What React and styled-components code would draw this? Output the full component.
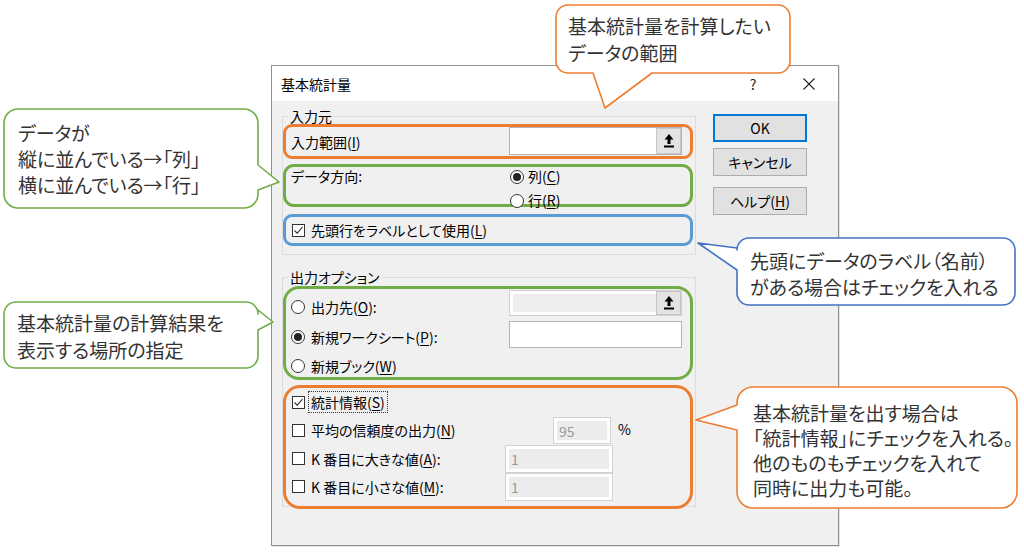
import React from 'react';
import styled, { createGlobalStyle } from 'styled-components';

const GlobalStyle = createGlobalStyle`
  body {
    margin: 0;
    background: #fff;
    font-family: "Noto Sans CJK JP", "Noto Sans", sans-serif;
    font-feature-settings: "palt" 1;
  }
`;

const Page = styled.div`
  position: relative;
  width: 1024px;
  height: 555px;
  overflow: hidden;
  box-sizing: border-box;
  padding: 65px 0 0 271px;
  background: #fff;
`;

// ダイアログ本体
const Dialog = styled.div`
  width: 568px;
  height: 481px;
  box-sizing: border-box;
  border: 1px solid #8f8f8f;
  box-shadow: 1px 1px 0 #e4e4e4;
  background: #f0f0f0;
  display: flex;
  flex-direction: column;
  font-size: 14px;
  color: #000;
`;

const TitleBar = styled.div`
  height: 35px;
  flex-shrink: 0;
  display: flex;
  align-items: center;
  padding: 0 6px 0 9px;
  background: #fff;
`;

const Title = styled.div`
  flex: 1;
  font-size: 14px;
`;

const TitleButton = styled.div`
  width: 46px;
  height: 35px;
  margin-left: ${(p) => p.$ml || 0}px;
  display: flex;
  align-items: center;
  justify-content: center;
  font-size: 14px;
  color: #222;
`;

const Body = styled.div`
  display: flex;
  gap: 17px;
  padding: 8px 0 0 10px;
`;

const LeftCol = styled.div`
  width: 414px;
  display: flex;
  flex-direction: column;
`;

const Group = styled.fieldset`
  margin: ${(p) => p.$mt || 0}px 0 0;
  padding: 0 2px ${(p) => p.$pb || 0}px 0;
  border: 1px solid #dcdcdc;
  min-width: 0;
`;

const Legend = styled.legend`
  margin-left: 5px;
  padding: 0 2px;
  font-size: 14px;
  line-height: 15px;
`;

const Highlight = styled.div`
  box-sizing: border-box;
  height: ${(p) => p.$h}px;
  margin-top: ${(p) => p.$mt || 0}px;
  margin-bottom: ${(p) => p.$mb || 0}px;
  border: 3px solid ${(p) => p.$color};
  border-radius: ${(p) => p.$r || 10}px;
  padding: 0 8px 0 5px;
`;

const Row = styled.div`
  display: flex;
  align-items: ${(p) => p.$align || 'center'};
  height: ${(p) => p.$h}px;
`;

const Cell = styled.div`
  width: ${(p) => p.$w || 218}px;
  flex-shrink: 0;
  margin-top: ${(p) => p.$mt || 0}px;
  line-height: ${(p) => p.$lh || 20}px;
  white-space: nowrap;
`;

const Choice = styled.label`
  display: inline-flex;
  align-items: center;
  gap: ${(p) => p.$gap || 6}px;
  margin-left: ${(p) => p.$ml || 0}px;
  line-height: ${(p) => p.$lh || 20}px;
  white-space: nowrap;
`;

const RadioList = styled.div`
  display: flex;
  flex-direction: column;
  gap: 5px;
`;

const Radio = styled.span`
  position: relative;
  width: 14px;
  height: 14px;
  box-sizing: border-box;
  border-radius: 50%;
  border: 1px solid #333;
  background: #fff;
  flex-shrink: 0;

  &::after {
    content: '';
    display: ${(p) => (p.$checked ? 'block' : 'none')};
    position: absolute;
    left: 2px;
    top: 2px;
    width: 8px;
    height: 8px;
    border-radius: 50%;
    background: #222;
  }
`;

const Box = styled.span`
  width: 13px;
  height: 13px;
  box-sizing: border-box;
  border: 1px solid #333;
  background: #fff;
  flex-shrink: 0;
  display: flex;
  align-items: center;
  justify-content: center;
`;

const U = styled.span`
  text-decoration: underline;
  text-underline-offset: 2px;
`;

const Focus = styled.span`
  outline: 1px dotted #333;
  outline-offset: 0;
  padding: 0 2px;
  margin-left: -2px;
`;

const TextBox = styled.div`
  width: ${(p) => p.$w || 173}px;
  height: ${(p) => p.$h || 27}px;
  margin-top: ${(p) => p.$mt || 0}px;
  box-sizing: border-box;
  border: 1px solid #b4b4b4;
  background: #fff;
`;

const RefField = styled.div`
  display: flex;
  width: 173px;
  height: ${(p) => p.$h || 28}px;
  margin-top: ${(p) => p.$mt || 0}px;
  box-sizing: border-box;
  border: 1px solid ${(p) => (p.$disabled ? '#d0d0d0' : '#b4b4b4')};
  background: ${(p) => (p.$disabled ? '#ededed' : '#fff')};
  box-shadow: ${(p) => (p.$disabled ? 'inset 0 0 0 3px #fff' : 'none')};
`;

const RefButton = styled.div`
  width: 25px;
  margin-left: auto;
  box-sizing: border-box;
  border: 1px solid #c6c6c6;
  background: #e3e3e3;
  display: flex;
  align-items: center;
  justify-content: center;
`;

const NumBox = styled.div`
  width: ${(p) => p.$w}px;
  height: ${(p) => p.$h || 28}px;
  margin-left: ${(p) => p.$ml || 0}px;
  box-sizing: border-box;
  border: 1px solid #d2d2d2;
  background: #ececec;
  box-shadow: inset 0 0 0 3px #fff;
  padding-left: 5px;
  display: flex;
  align-items: center;
  color: #9a9a9a;
  font-size: 14px;
`;

const Unit = styled.span`
  margin-left: 7px;
  margin-top: -4px;
`;

const ButtonCol = styled.div`
  width: 94px;
  display: flex;
  flex-direction: column;
`;

const DlgButton = styled.button`
  height: 28px;
  margin-top: ${(p) => p.$mt}px;
  box-sizing: border-box;
  border: ${(p) => (p.$primary ? '2px solid #0078d7' : '1px solid #adadad')};
  background: #e1e1e1;
  font-family: inherit;
  font-feature-settings: "palt" 1;
  font-size: 14px;
  color: #000;
  padding: 0;
`;

// 吹き出し
const CalloutBox = styled.div`
  position: absolute;
  left: ${(p) => p.$x}px;
  top: ${(p) => p.$y}px;
  width: ${(p) => p.$w}px;
  height: ${(p) => p.$h}px;
  box-sizing: border-box;
  padding: ${(p) => p.$pt}px 0 0 ${(p) => p.$pl}px;
  font-size: 19px;
  line-height: ${(p) => p.$lh}px;
  color: #333;
  white-space: nowrap;
  z-index: 2;
`;

const BalloonSvg = styled.svg`
  position: absolute;
  left: 0;
  top: 0;
  overflow: visible;
`;

const CalloutText = styled.div`
  position: relative;
`;

const balloonPath = (w, h, r, t) => {
  const tip = `L ${t.tip[0]} ${t.tip[1]}`;
  const d = [`M ${r} 0`];
  d.push(`L ${w - r} 0 A ${r} ${r} 0 0 1 ${w} ${r}`);
  if (t.side === 'right') d.push(`L ${w} ${t.p1} ${tip} L ${w} ${t.p2}`);
  d.push(`L ${w} ${h - r} A ${r} ${r} 0 0 1 ${w - r} ${h}`);
  if (t.side === 'bottom') d.push(`L ${t.p1} ${h} ${tip} L ${t.p2} ${h}`);
  d.push(`L ${r} ${h} A ${r} ${r} 0 0 1 0 ${h - r}`);
  if (t.side === 'left') d.push(`L 0 ${t.p1} ${tip} L 0 ${t.p2}`);
  d.push(`L 0 ${r} A ${r} ${r} 0 0 1 ${r} 0 Z`);
  return d.join(' ');
};

const callouts = [
  {
    id: 'range', color: '#ed7d31', x: 556, y: 5, w: 234, h: 68, r: 12, pt: 7, pl: 12, lh: 27,
    tail: { side: 'bottom', p1: 96, p2: 37, tip: [49, 103] },
    lines: ['基本統計量を計算したい', 'データの範囲'],
  },
  {
    id: 'dir', color: '#70ad47', x: 4, y: 109, w: 254, h: 99, r: 14, pt: 11, pl: 14, lh: 26,
    tail: { side: 'right', p1: 56, p2: 81, tip: [275, 73] },
    lines: ['データが', '縦に並んでいる→「列」', '横に並んでいる→「行」'],
  },
  {
    id: 'label', color: '#4472c4', x: 737, y: 238, w: 278, h: 67, r: 12, pt: 10, pl: 13, lh: 26,
    tail: { side: 'left', p1: 32, p2: 10, tip: [-39, 5] },
    lines: ['先頭にデータのラベル（名前）', 'がある場合はチェックを入れる'],
  },
  {
    id: 'out', color: '#70ad47', x: 4, y: 302, w: 254, h: 66, r: 12, pt: 7, pl: 13, lh: 27,
    tail: { side: 'right', p1: 8, p2: 28, tip: [269, 20] },
    lines: ['基本統計量の計算結果を', '表示する場所の指定'],
  },
  {
    id: 'stats', color: '#ed7d31', x: 737, y: 387, w: 280, h: 121, r: 16, pt: 13, pl: 16, lh: 25,
    tail: { side: 'left', p1: 43, p2: 18, tip: [-41, 33] },
    lines: ['基本統計量を出す場合は', '「統計情報」にチェックを入れる。', '他のものもチェックを入れて', '同時に出力も可能。'],
  },
];

const Callout = ({ c }) => (
  <CalloutBox $x={c.x} $y={c.y} $w={c.w} $h={c.h} $pt={c.pt} $pl={c.pl} $lh={c.lh}>
    <BalloonSvg width={c.w} height={c.h} viewBox={`0 0 ${c.w} ${c.h}`}>
      <path
        d={balloonPath(c.w, c.h, c.r, c.tail)}
        fill="#fff"
        stroke={c.color}
        strokeWidth="1.6"
        strokeLinejoin="round"
      />
    </BalloonSvg>
    <CalloutText>
      {c.lines.map((l) => (
        <div key={l}>{l}</div>
      ))}
    </CalloutText>
  </CalloutBox>
);

const UploadIcon = () => (
  <svg width="10" height="14" viewBox="0 0 10 14">
    <path d="M5 0 L9.5 5.5 H6.5 V10 H3.5 V5.5 H0.5 Z" fill="#000" />
    <rect x="0" y="11.5" width="10" height="2" fill="#000" />
  </svg>
);

const CloseIcon = () => (
  <svg width="12" height="12" viewBox="0 0 12 12">
    <path d="M0.5 0.5 L11.5 11.5 M11.5 0.5 L0.5 11.5" stroke="#222" strokeWidth="1.1" />
  </svg>
);

const Check = ({ checked }) => (
  <Box>
    {checked && (
      <svg width="11" height="11" viewBox="0 0 11 11">
        <path d="M1.5 5.5 L4.2 8.2 L9.5 2.2" fill="none" stroke="#333" strokeWidth="1.1" />
      </svg>
    )}
  </Box>
);

const App = () => (
  <Page>
    <GlobalStyle />
    <Dialog>
      <TitleBar>
        <Title>基本統計量</Title>
        <TitleButton>?</TitleButton>
        <TitleButton $ml={10}>
          <CloseIcon />
        </TitleButton>
      </TitleBar>
      <Body>
        <LeftCol>
          <Group $pb={8}>
            <Legend>入力元</Legend>
            <Highlight $color="#ed7d31" $h={35} $r={9}>
              <Row $h={29}>
                <Cell>
                  入力範囲(<U>I</U>)
                </Cell>
                <RefField $mt={-1}>
                  <RefButton>
                    <UploadIcon />
                  </RefButton>
                </RefField>
              </Row>
            </Highlight>
            <Highlight $color="#70ad47" $h={43} $mt={5} $r={11}>
              <Row $h={37} $align="flex-start">
                <Cell $lh={19}>データ方向:</Cell>
                <RadioList>
                  <Choice $ml={1} $gap={4} $lh={19}>
                    <Radio $checked />
                    <span>
                      列(<U>C</U>)
                    </span>
                  </Choice>
                  <Choice $ml={1} $gap={4} $lh={19}>
                    <Radio />
                    <span>
                      行(<U>R</U>)
                    </span>
                  </Choice>
                </RadioList>
              </Row>
            </Highlight>
            <Highlight $color="#5b9bd5" $h={32} $mt={7} $r={9}>
              <Row $h={26}>
                <Choice $ml={1}>
                  <Check checked />
                  <span>
                    先頭行をラベルとして使用(<U>L</U>)
                  </span>
                </Choice>
              </Row>
            </Highlight>
          </Group>

          <Group $mt={15}>
            <Legend>出力オプション</Legend>
            <Highlight $color="#70ad47" $h={94} $mt={1} $r={16}>
              <Row $h={30} $align="flex-start">
                <Cell $mt={8}>
                  <Choice>
                    <Radio />
                    <span>
                      出力先(<U>O</U>):
                    </span>
                  </Choice>
                </Cell>
                <RefField $disabled $mt={1} $h={26}>
                  <RefButton>
                    <UploadIcon />
                  </RefButton>
                </RefField>
              </Row>
              <Row $h={30} $align="flex-start">
                <Cell $mt={8}>
                  <Choice>
                    <Radio $checked />
                    <span>
                      新規ワークシート(<U>P</U>):
                    </span>
                  </Choice>
                </Cell>
                <TextBox $mt={2} $h={27} />
              </Row>
              <Row $h={28} $align="flex-start">
                <Cell $mt={7}>
                  <Choice>
                    <Radio />
                    <span>
                      新規ブック(<U>W</U>)
                    </span>
                  </Choice>
                </Cell>
              </Row>
            </Highlight>

            <Highlight $color="#ed7d31" $h={124} $mt={5} $mb={-3} $r={17}>
              <Row $h={28}>
                <Choice $ml={1}>
                  <Check checked />
                  <Focus>
                    統計情報(<U>S</U>)
                  </Focus>
                </Choice>
              </Row>
              <Row $h={29}>
                <Cell $w={214}>
                  <Choice $ml={1}>
                    <Check />
                    <span>
                      平均の信頼度の出力(<U>N</U>)
                    </span>
                  </Choice>
                </Cell>
                <NumBox $w={58} $h={27} $ml={48}>95</NumBox>
                <Unit>%</Unit>
              </Row>
              <Row $h={28}>
                <Cell $w={214}>
                  <Choice $ml={1}>
                    <Check />
                    <span>
                      K 番目に大きな値(<U>A</U>):
                    </span>
                  </Choice>
                </Cell>
                <NumBox $w={108}>1</NumBox>
              </Row>
              <Row $h={28}>
                <Cell $w={214}>
                  <Choice $ml={1}>
                    <Check />
                    <span>
                      K 番目に小さな値(<U>M</U>):
                    </span>
                  </Choice>
                </Cell>
                <NumBox $w={108}>1</NumBox>
              </Row>
            </Highlight>
          </Group>
        </LeftCol>

        <ButtonCol>
          <DlgButton $primary $mt={5}>OK</DlgButton>
          <DlgButton $mt={6}>キャンセル</DlgButton>
          <DlgButton $mt={11}>
            ヘルプ(<U>H</U>)
          </DlgButton>
        </ButtonCol>
      </Body>
    </Dialog>

    {callouts.map((c) => (
      <Callout key={c.id} c={c} />
    ))}
  </Page>
);

export default App;
